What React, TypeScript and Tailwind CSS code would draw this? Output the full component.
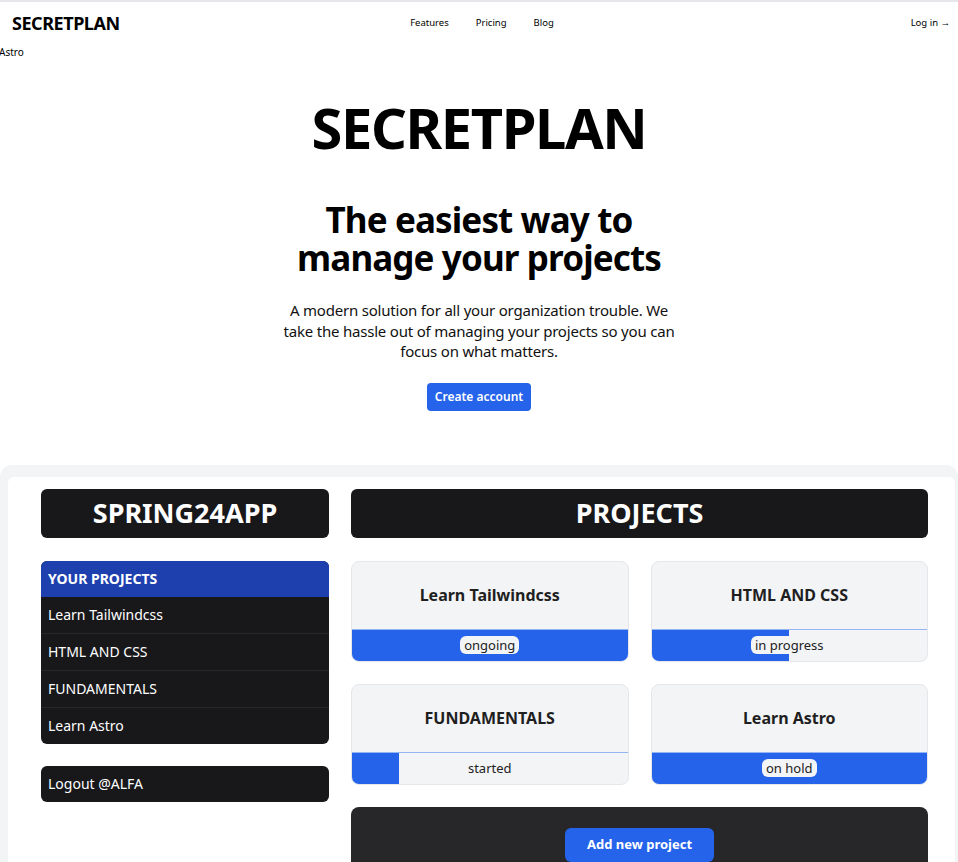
const projects = [
  { name: "Learn Tailwindcss", status: "ongoing", progress: 100 },
  { name: "HTML AND CSS", status: "in progress", progress: 50 },
  { name: "FUNDAMENTALS", status: "started", progress: 17 },
  { name: "Learn Astro", status: "on hold", progress: 100 },
];

function ProjectCard({ name, status, progress }: { name: string; status: string; progress: number }) {
  return (
    <div className="h-[101px] flex flex-col rounded-lg border border-[#e5e7eb] bg-[#f3f4f6] overflow-hidden">
      <div className="flex-1 flex items-center justify-center">
        <h3 className="text-[16px] font-bold text-[#1f1f1f]">{name}</h3>
      </div>
      <div className="relative h-[32px] border-t border-[#93b4f5] flex items-center justify-center">
        <div className="absolute left-0 top-0 bottom-0 bg-[#2563eb]" style={{ width: `${progress}%` }} />
        <span className="relative rounded-md bg-[#f3f4f6] px-1 text-[13px] leading-[18px] text-[#222]">{status}</span>
      </div>
    </div>
  );
}

export default function App() {
  return (
    <div className="min-h-screen bg-white text-black font-['Noto_Sans',sans-serif] border-t-2 border-[#e5e7eb]">
      <header className="h-[42px] px-3 flex items-center justify-between">
        <a className="text-[18px] font-bold tracking-tight w-[200px]">SECRETPLAN</a>
        <nav className="flex gap-[27px] text-[9.5px] pl-[2px]">
          <a>Features</a>
          <a>Pricing</a>
          <a>Blog</a>
        </nav>
        <a className="w-[200px] text-right text-[9.5px] -mr-[4px]">Log in →</a>
      </header>
      <div className="mt-[3px] text-[10px] leading-none -ml-[1px]">Astro</div>

      <section className="flex flex-col items-center text-center pt-[42px] pb-[54px]">
        <h1 className="text-[56px] font-bold leading-none tracking-tight">SECRETPLAN</h1>
        <h2 className="mt-[46px] text-[35px] font-bold leading-[38px] tracking-tight">
          <span className="block">The easiest way to</span>
          <span className="block">manage your projects</span>
        </h2>
        <p className="mt-[23px] w-[396px] text-[15px] leading-[20.5px] tracking-[-0.2px] text-[#111]">
          A modern solution for all your organization trouble. We take the hassle out of managing your projects so you can
          focus on what matters.
        </p>
        <button className="mt-[21px] h-[28px] px-[8px] rounded bg-[#2563eb] text-white text-[12px] font-semibold">
          Create account
        </button>
      </section>

      <div className="bg-[#f3f4f6] rounded-t-xl pt-[12px] pl-[8px] pr-[3px]">
        <div className="bg-white rounded-t-md pt-[12px] pl-[33px] pr-[27px] flex gap-[22px]">
          <aside className="w-[288px] shrink-0 flex flex-col">
            <div className="h-[49px] rounded-md bg-[#18181b] flex items-center justify-center text-white text-[27px] font-bold">
              SPRING24APP
            </div>
            <ul className="mt-[23px] rounded-md overflow-hidden bg-[#18181b] text-white text-[14px]">
              <li className="h-[36px] px-[7px] flex items-center bg-[#1e40af] font-bold">YOUR PROJECTS</li>
              {projects.map((p) => (
                <li key={p.name} className="h-[37px] px-[7px] flex items-center border-b border-[#27272a] last:border-b-0 last:h-[36px]">
                  {p.name}
                </li>
              ))}
            </ul>
            <div className="mt-[22px] h-[36px] rounded-md bg-[#18181b] px-[7px] flex items-center text-white text-[14px]">
              Logout @ALFA
            </div>
          </aside>

          <main className="flex-1 flex flex-col">
            <div className="h-[49px] rounded-md bg-[#18181b] flex items-center justify-center text-white text-[27px] font-bold">
              PROJECTS
            </div>
            <div className="mt-[23px] grid grid-cols-2 gap-x-[22px] gap-y-[22px]">
              {projects.map((p) => (
                <ProjectCard key={p.name} {...p} />
              ))}
            </div>
            <div className="mt-[22px] h-[80px] rounded-t-lg bg-[#27272a] flex flex-col items-center pt-[21px]">
              <button className="h-[34px] px-[22px] rounded-md bg-[#2563eb] text-white text-[13px] font-bold">
                Add new project
              </button>
              <div className="-ml-[260px] w-[80px] h-[20px] rounded-md border border-[#3f3f46] bg-[#18181b]" />
            </div>
          </main>
        </div>
      </div>
    </div>
  );
}
